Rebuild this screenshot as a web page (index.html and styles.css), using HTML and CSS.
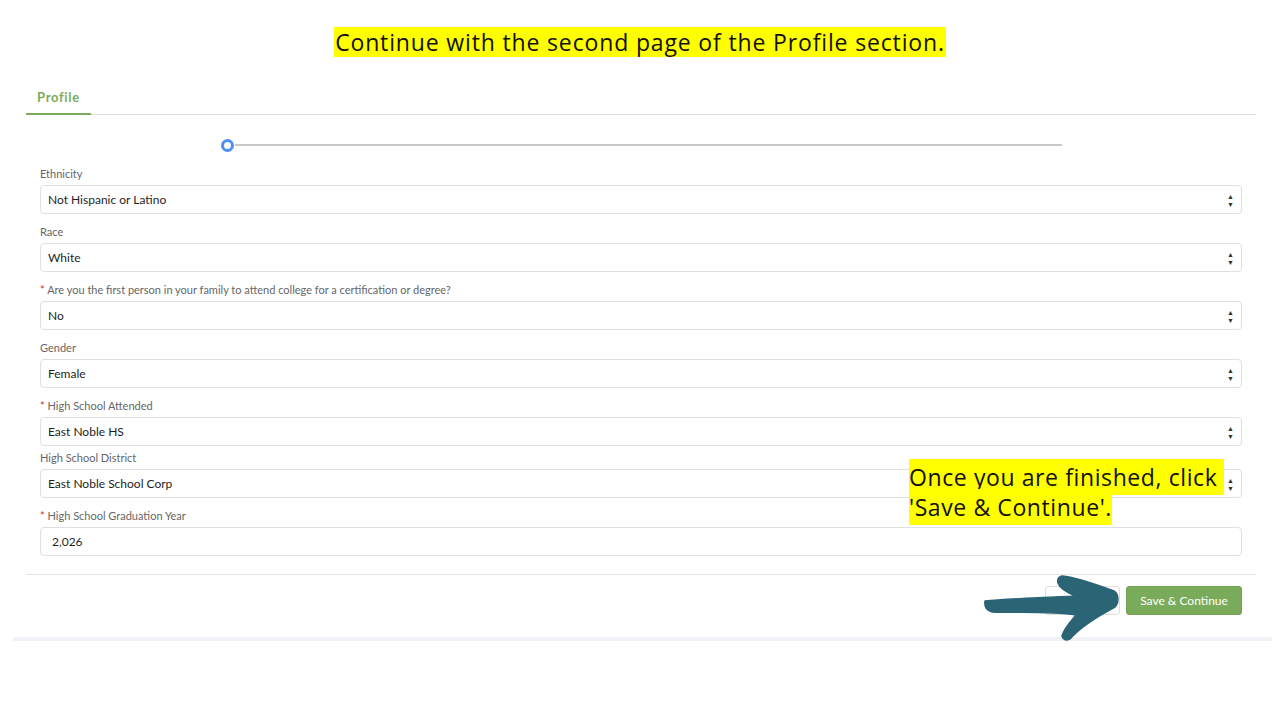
FILE: index.html
```html
<!DOCTYPE html>
<html>
<head>
<meta charset="utf-8">
<link rel="stylesheet" href="styles.css">
</head>
<body>
<div class="banner"><span class="hl">Continue with the second page of the Profile section.</span></div>
<div class="card">
  <div class="tabs"><div class="tab">Profile</div></div>
  <div class="stepper"><span class="dot"></span><span class="track"></span></div>
  <form class="form">
    <div class="field">
      <label class="lbl">Ethnicity</label>
      <div class="select"><span>Not Hispanic or Latino</span><span class="arr">▲<br>▼</span></div>
    </div>
    <div class="field">
      <label class="lbl">Race</label>
      <div class="select"><span>White</span><span class="arr">▲<br>▼</span></div>
    </div>
    <div class="field">
      <label class="lbl"><i class="req">*</i> Are you the first person in your family to attend college for a certification or degree?</label>
      <div class="select"><span>No</span><span class="arr">▲<br>▼</span></div>
    </div>
    <div class="field">
      <label class="lbl">Gender</label>
      <div class="select"><span>Female</span><span class="arr">▲<br>▼</span></div>
    </div>
    <div class="field">
      <label class="lbl"><i class="req">*</i> High School Attended</label>
      <div class="select"><span>East Noble HS</span><span class="arr">▲<br>▼</span></div>
    </div>
    <div class="field tight">
      <label class="lbl">High School District</label>
      <div class="select"><span>East Noble School Corp</span><span class="arr">▲<br>▼</span></div>
    </div>
    <div class="field">
      <label class="lbl"><i class="req">*</i> High School Graduation Year</label>
      <div class="select input"><span>2,026</span></div>
    </div>
  </form>
  <div class="footer">
    <button class="btn ghost" type="button" aria-label="Back"></button>
    <button class="btn primary" type="button">Save &amp; Continue</button>
  </div>
</div>
<div class="note"><span class="hl2">Once you are finished, click&nbsp;<br>'Save &amp; Continue'.</span></div>
<svg class="arrow" width="150" height="75" viewBox="0 0 150 75">
  <path d="M5 30 C 25 28, 60 27, 96 25 C 88 22, 80 18, 78 12 C 77 8, 78 6, 82 5 C 95 6, 115 13, 134 20 C 139 23, 139 32, 135 36 C 120 44, 100 56, 90 68 C 87 70, 83 69, 82 65 C 84 57, 92 49, 96 44 C 70 40, 40 42, 12 41 C 7 40, 4 36, 5 30 Z" fill="#2b6475" stroke="#2b6475" stroke-width="1.5" stroke-linejoin="round"/>
</svg>
</body>
</html>
```
FILE: styles.css
```css
* { box-sizing: border-box; }
body {
  margin: 0;
  background: #fff;
  font-family: "Lato", "Liberation Sans", sans-serif;
  position: relative;
  width: 1280px;
  height: 720px;
  overflow: hidden;
}
.banner {
  padding-top: 27px;
  text-align: center;
  height: 82px;
}
.hl {
  display: inline-block;
  background: #ffff00;
  color: #111;
  font-family: "Open Sans", sans-serif;
  font-size: 23px;
  line-height: 30px;
  padding: 0 1px;
  letter-spacing: 0.85px;
}
.card {
  margin: 0 8px 0 13px;
  padding: 0 16px 0 13px;
  border-bottom: 4px solid #f1f2f6;
}
.tabs {
  border-bottom: 1px solid #dddddd;
  display: flex;
}
.tab {
  color: #7aab5a;
  font-weight: bold;
  font-size: 13px;
  letter-spacing: 0.7px;
  padding: 7px 11px 8px 11px;
  height: 33px;
  border-bottom: 2px solid #7aab5a;
  margin-bottom: -1px;
  line-height: 16px;
}
.stepper {
  display: flex;
  align-items: center;
  padding-left: 195px;
  height: 30px;
  margin-top: 15px;
}
.dot {
  width: 13px;
  height: 13px;
  border-radius: 50%;
  border: 3px solid #4e8ff0;
  background: #fff;
}
.track {
  margin-left: 1px;
  width: 827px;
  height: 2px;
  background: #c8c8c8;
}
.form {
  padding: 0 14px;
  display: flex;
  flex-direction: column;
}
.field {
  display: flex;
  flex-direction: column;
  margin-top: 11px;
}
.field:first-child { margin-top: 7px; }
.field.tight { margin-top: 5px; }
.lbl {
  font-size: 11px;
  color: #666;
  line-height: 14px;
  margin-bottom: 4px;
}
.req {
  font-style: normal;
  color: #c0392b;
}
.select {
  height: 29px;
  border: 1px solid #e0e0e0;
  border-radius: 4px;
  display: flex;
  align-items: center;
  justify-content: space-between;
  padding: 0 7px 0 7px;
  font-size: 12px;
  color: #1e1e1e;
}
.select.input { padding-left: 11px; }
.arr {
  font-size: 7px;
  line-height: 8px;
  color: #333;
  text-align: center;
}
.footer {
  margin-top: 18px;
  border-top: 1px solid #e3e3e3;
  display: flex;
  justify-content: flex-end;
  gap: 6px;
  padding: 11px 14px 22px 0;
}
.btn {
  font-family: "Lato", "Liberation Sans", sans-serif;
  font-size: 12px;
  height: 29px;
  border-radius: 3px;
  padding: 0 14px;
}
.ghost {
  background: #fff;
  border: 1px solid #ddd;
  color: #555;
  width: 75px;
}
.primary {
  background: #7aab5a;
  border: 1px solid #72a253;
  color: #fff;
  width: 116px;
  padding: 0;
}
.note {
  position: absolute;
  left: 909px;
  top: 463px;
}
.hl2 {
  background: #ffff00;
  color: #111;
  font-family: "Open Sans", sans-serif;
  font-size: 23px;
  line-height: 29.5px;
  letter-spacing: 0.6px;
  -webkit-box-decoration-break: clone;
  box-decoration-break: clone;
  padding: 2px 0 2px 0;
}
.arrow {
  position: absolute;
  left: 980px;
  top: 571px;
}
```
